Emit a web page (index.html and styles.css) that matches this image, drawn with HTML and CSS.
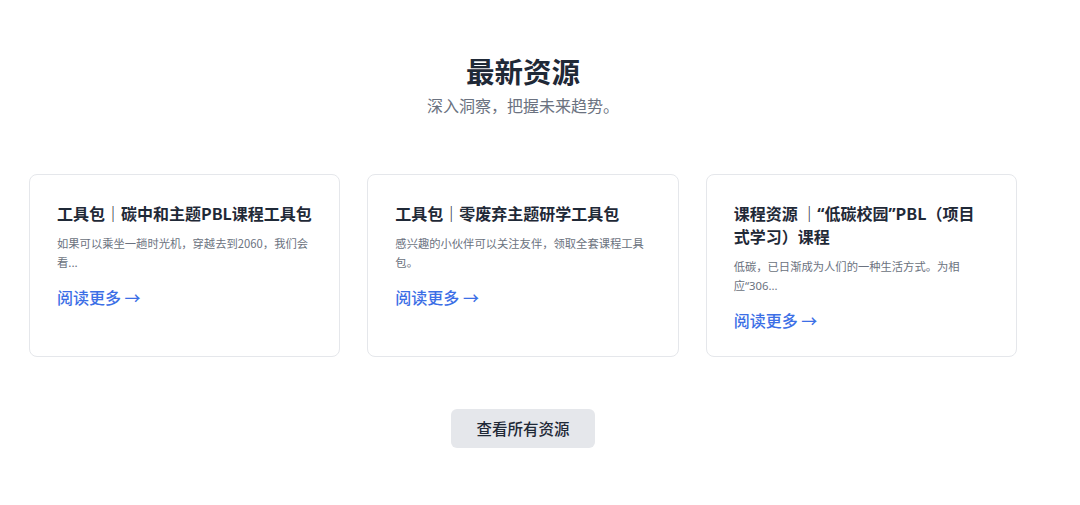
FILE: index.html
```html
<!DOCTYPE html>
<html lang="zh-CN">
<head>
    <meta charset="UTF-8">
    <meta name="viewport" content="width=device-width, initial-scale=1.0">
    <title>最新资源</title>
    <link rel="stylesheet" href="styles.css">
</head>
<body>

    <div class="page">
        <section class="resources">
            <h2>最新资源</h2>
            <p class="subtitle">深入洞察，把握未来趋势。</p>

            <div class="card-grid">
                <div class="card">
                    <h3>工具包｜碳中和主题PBL课程工具包</h3>
                    <p>如果可以乘坐一趟时光机，穿越去到2060，我们会看...</p>
                    <a href="#" class="read-more">阅读更多 →</a>
                </div>
                <div class="card">
                    <h3>工具包｜零废弃主题研学工具包</h3>
                    <p>感兴趣的小伙伴可以关注友伴，领取全套课程工具包。</p>
                    <a href="#" class="read-more">阅读更多 →</a>
                </div>
                <div class="card">
                    <h3>课程资源 ｜<span class="q">“</span>低碳校园<span class="q">”</span>PBL（项目式学习）课程</h3>
                    <p>低碳，已日渐成为人们的一种生活方式。为相<span class="nowrap">应<span class="q">“306...</span></span></p>
                    <a href="#" class="read-more">阅读更多 →</a>
                </div>
            </div>

            <a href="#" class="all-btn">查看所有资源</a>
        </section>
    </div>

</body>
</html>
```

FILE: styles.css
```css
body {
    font-family: "Noto Sans CJK SC", "Noto Sans", sans-serif;
    background-color: #ffffff;
    color: #1f2937;
    margin: 0;
}

.page {
    width: 1046px;
}

.resources {
    max-width: 988px;
    margin: 0 auto;
    padding-top: 52px;
    text-align: center;
}

h2 {
    font-size: 28.5px;
    line-height: 37px;
    font-weight: 700;
    margin: 0;
    color: #1f2937;
}

.subtitle {
    font-size: 16px;
    line-height: 24px;
    color: #6b7280;
    margin: 4px 0 0;
}

.card-grid {
    display: grid;
    grid-template-columns: repeat(3, 1fr);
    gap: 27px;
    margin-top: 57px;
    text-align: left;
}

.card {
    border: 1px solid #e5e7eb;
    border-radius: 8px;
    padding: 27px 26px 25px 27px;
    background-color: #fff;
}

.card h3 {
    font-size: 16px;
    line-height: 22px;
    font-weight: 700;
    margin: 0;
    color: #1f2937;
}

.card p {
    font-size: 11.3px;
    line-height: 19px;
    color: #6b7280;
    margin: 9.5px 0 0;
}

.q {
    font-family: "Noto Sans", sans-serif;
}

.nowrap {
    white-space: nowrap;
}

.read-more {
    display: block;
    width: fit-content;
    margin-top: 14px;
    font-size: 16px;
    line-height: 22px;
    font-weight: 500;
    color: #3c6fe6;
    text-decoration: none;
}

.all-btn {
    display: inline-block;
    margin-top: 52px;
    width: 144px;
    height: 39px;
    line-height: 39px;
    border-radius: 6px;
    background-color: #e5e7eb;
    color: #1f2937;
    font-size: 15.5px;
    font-weight: 500;
    text-decoration: none;
}
```
